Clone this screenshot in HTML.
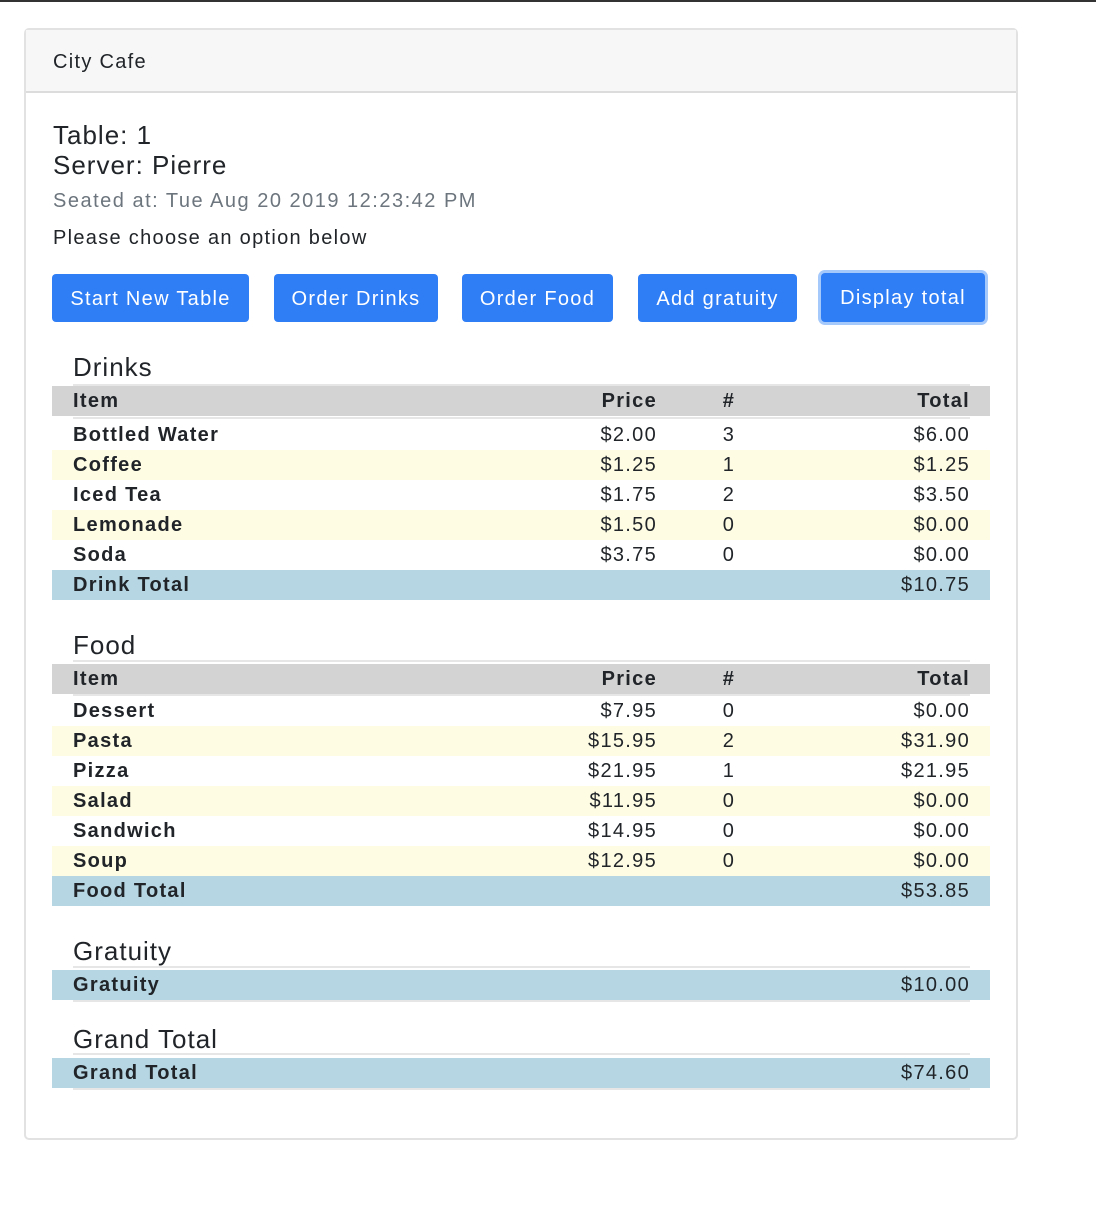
<!DOCTYPE html>
<html><head><meta charset="utf-8"><style>
*{margin:0;padding:0;box-sizing:border-box}
body{width:1096px;height:1224px;background:#fff;font-family:"Liberation Sans",sans-serif;color:#212529;position:relative;overflow:hidden;letter-spacing:1.3px}
.a{position:absolute}
.topbar{left:0;top:0;width:1096px;height:2px;background:#333}
.card{left:24px;top:28px;width:994px;height:1112px;border:2px solid #e2e2e2;border-radius:5px}
.hdr{left:26px;top:30px;width:990px;height:63px;background:#f7f7f7;border-bottom:2px solid #dcdcdc}
.t{white-space:nowrap}
.btn{background:#2f7ef6;color:#fff;font-size:20px;border-radius:4px;height:48px;top:274px;display:flex;align-items:center;justify-content:center;padding-top:2px}
.row{left:52px;width:938px;height:30px;font-size:20px;line-height:30px}
.row span{position:absolute;top:0}
.it{left:21px;font-weight:bold}
.pr{right:333px}
.nm{left:667px;width:20px;text-align:center}
.tt{right:20px}
.g{background:#d3d3d3;font-weight:bold}
.g span{font-weight:bold}
.y{background:#fefde4}
.b{background:#b5d6e2}
.ln{left:73px;width:897px;height:2px;background:#e6e6e6}
.h{left:73px;font-size:26px;line-height:30px;letter-spacing:1px}
</style></head><body>
<div class="a topbar"></div>
<div class="a card"></div>
<div class="a hdr"></div>
<div class="a t" style="left:53px;top:51px;font-size:20px">City Cafe</div>
<div class="a t" style="left:53px;top:120px;font-size:26px;line-height:30px;letter-spacing:1px">Table: 1</div>
<div class="a t" style="left:53px;top:150px;font-size:26px;line-height:30px;letter-spacing:1px">Server: Pierre</div>
<div class="a t" style="left:53px;top:190px;font-size:20px;color:#6c757d;letter-spacing:1.5px">Seated at: Tue Aug 20 2019 12:23:42 PM</div>
<div class="a t" style="left:53px;top:227px;font-size:20px">Please choose an option below</div>

<div class="a btn" style="left:52px;width:197px">Start New Table</div>
<div class="a btn" style="left:274px;width:164px">Order Drinks</div>
<div class="a btn" style="left:462px;width:151px">Order Food</div>
<div class="a btn" style="left:638px;width:159px">Add gratuity</div>
<div class="a" style="left:818px;top:270px;width:170px;height:55px;border-radius:7px;background:#a5c9fb"></div>
<div class="a btn" style="left:821px;width:164px;height:49px;top:273px">Display total</div>

<div class="a h t" style="top:352px">Drinks</div>
<div class="a ln" style="top:384px"></div>
<div class="a row g" style="top:386px"><span class="it">Item</span><span class="pr">Price</span><span class="nm">#</span><span class="tt">Total</span></div>
<div class="a ln" style="top:417px"></div>
<div class="a row" style="top:420px"><span class="it">Bottled Water</span><span class="pr">$2.00</span><span class="nm">3</span><span class="tt">$6.00</span></div>
<div class="a row y" style="top:450px"><span class="it">Coffee</span><span class="pr">$1.25</span><span class="nm">1</span><span class="tt">$1.25</span></div>
<div class="a row" style="top:480px"><span class="it">Iced Tea</span><span class="pr">$1.75</span><span class="nm">2</span><span class="tt">$3.50</span></div>
<div class="a row y" style="top:510px"><span class="it">Lemonade</span><span class="pr">$1.50</span><span class="nm">0</span><span class="tt">$0.00</span></div>
<div class="a row" style="top:540px"><span class="it">Soda</span><span class="pr">$3.75</span><span class="nm">0</span><span class="tt">$0.00</span></div>
<div class="a row b" style="top:570px"><span class="it">Drink Total</span><span class="tt">$10.75</span></div>

<div class="a h t" style="top:630px">Food</div>
<div class="a ln" style="top:660px"></div>
<div class="a row g" style="top:664px"><span class="it">Item</span><span class="pr">Price</span><span class="nm">#</span><span class="tt">Total</span></div>
<div class="a ln" style="top:694px"></div>
<div class="a row" style="top:696px"><span class="it">Dessert</span><span class="pr">$7.95</span><span class="nm">0</span><span class="tt">$0.00</span></div>
<div class="a row y" style="top:726px"><span class="it">Pasta</span><span class="pr">$15.95</span><span class="nm">2</span><span class="tt">$31.90</span></div>
<div class="a row" style="top:756px"><span class="it">Pizza</span><span class="pr">$21.95</span><span class="nm">1</span><span class="tt">$21.95</span></div>
<div class="a row y" style="top:786px"><span class="it">Salad</span><span class="pr">$11.95</span><span class="nm">0</span><span class="tt">$0.00</span></div>
<div class="a row" style="top:816px"><span class="it">Sandwich</span><span class="pr">$14.95</span><span class="nm">0</span><span class="tt">$0.00</span></div>
<div class="a row y" style="top:846px"><span class="it">Soup</span><span class="pr">$12.95</span><span class="nm">0</span><span class="tt">$0.00</span></div>
<div class="a row b" style="top:876px"><span class="it">Food Total</span><span class="tt">$53.85</span></div>

<div class="a h t" style="top:936px">Gratuity</div>
<div class="a ln" style="top:966px"></div>
<div class="a row b" style="top:970px"><span class="it">Gratuity</span><span class="tt">$10.00</span></div>
<div class="a ln" style="top:1000px"></div>

<div class="a h t" style="top:1024px">Grand Total</div>
<div class="a ln" style="top:1053px"></div>
<div class="a row b" style="top:1058px"><span class="it">Grand Total</span><span class="tt">$74.60</span></div>
<div class="a ln" style="top:1088px"></div>
</body></html>
